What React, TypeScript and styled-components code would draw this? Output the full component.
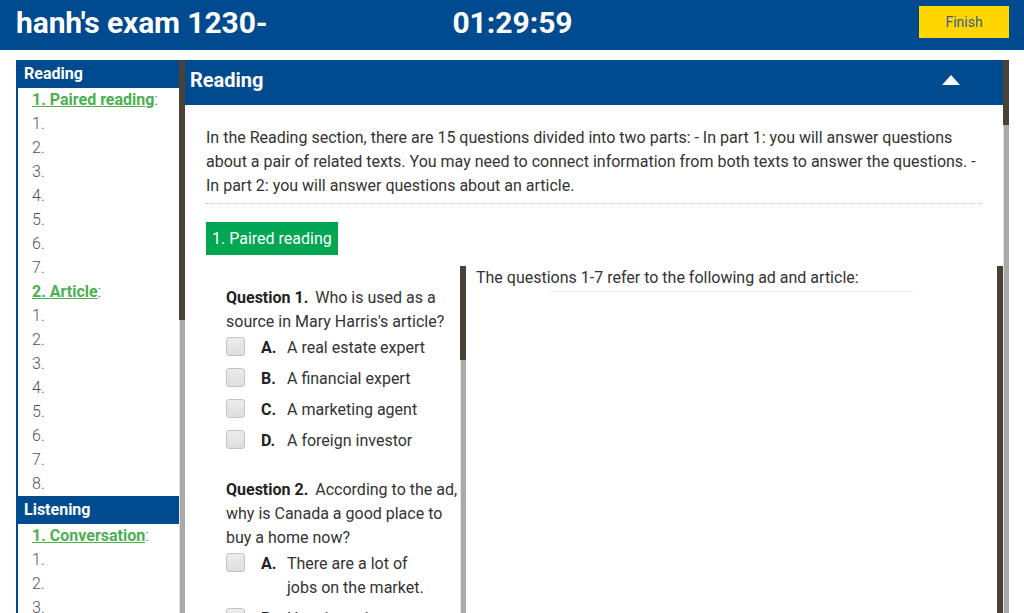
import styled, { createGlobalStyle } from "styled-components";

const Global = createGlobalStyle`
  html, body {
    margin: 0;
    padding: 0;
    background: #fff;
    overflow: hidden;
    font-family: Roboto, "Liberation Sans", Arial, sans-serif;
  }
  * { box-sizing: border-box; }
`;

const BLUE = "#004a8f";

const Page = styled.div`
  height: 100vh;
  display: flex;
  flex-direction: column;
`;

const TopBar = styled.header`
  height: 50px;
  flex: none;
  background: ${BLUE};
  color: #fff;
  display: grid;
  grid-template-columns: 1fr auto 1fr;
  align-items: center;
  padding: 0 15px 6px 16px;
`;

const ExamTitle = styled.h1`
  margin: 0;
  font-size: 30px;
  font-weight: 700;
  letter-spacing: -0.1px;
`;

const Timer = styled.div`
  font-size: 30px;
  font-weight: 700;
`;

const FinishButton = styled.button`
  justify-self: end;
  width: 90px;
  height: 32px;
  border: none;
  background: #ffd600;
  color: #3c5a8a;
  font-family: inherit;
  font-size: 14px;
`;

const Workspace = styled.div`
  flex: 1;
  min-height: 0;
  display: flex;
  padding: 10px 15px 0 16px;
`;

/* a pane with its own scroll track drawn beside the content */
const Pane = styled.div<{ $width?: number }>`
  display: flex;
  min-height: 0;
  min-width: 0;
  ${(p) => (p.$width ? `width: ${p.$width}px; flex: none;` : "flex: 1;")}
`;

const PaneContent = styled.div`
  flex: 1;
  min-width: 0;
  overflow: hidden;
`;

const ScrollTrack = styled.div`
  width: 6px;
  flex: none;
  background: #aaaaaa;
  border-left: 1px solid #e2e2e2;
`;

const ScrollThumb = styled.div<{ $size: number }>`
  height: ${(p) => p.$size}px;
  margin-left: -1px;
  background: #4a4237;
`;

const SideList = styled(PaneContent)`
  border-left: 2px solid ${BLUE};
`;

const SideHeading = styled.div`
  background: ${BLUE};
  color: #fff;
  font-weight: 700;
  font-size: 16px;
  height: 28px;
  line-height: 27px;
  padding-left: 6px;
`;

const SideRow = styled.div`
  line-height: 24px;
  font-size: 16px;
  padding-left: 14px;
  color: #555;
  font-weight: 300;
  white-space: nowrap;
`;

const PartLink = styled.a`
  color: #4caf50;
  font-weight: 700;
  text-decoration: underline;
`;

const SectionHeader = styled.div`
  height: 45px;
  background: ${BLUE};
  color: #fff;
  display: flex;
  align-items: center;
  justify-content: space-between;
  padding: 0 43px 5px 5px;
  font-size: 20px;
  font-weight: 700;
`;

const Caret = styled.span`
  width: 0;
  height: 0;
  border-left: 9px solid transparent;
  border-right: 9px solid transparent;
  border-bottom: 10px solid #fff;
`;

const Body = styled.div`
  padding: 21px 0 0 21px;
`;

const Intro = styled.p`
  margin: 0 21px 0 0;
  padding-bottom: 5px;
  font-size: 16px;
  line-height: 24px;
  color: #333;
  border-bottom: 1px dotted #c8c8c8;
`;

const PartBadge = styled.div`
  display: inline-block;
  margin-top: 18px;
  height: 33px;
  line-height: 33px;
  padding: 0 6px;
  background: #00a651;
  color: #fff;
  font-size: 16px;
`;

const Columns = styled.div`
  display: flex;
  margin-top: 11px;
  height: 480px;
`;

const QuestionList = styled.div`
  padding: 20px 0 0 20px;
`;

const Question = styled.div`
  margin-bottom: 25px;
  font-size: 16px;
  color: #333;
`;

const Prompt = styled.div`
  line-height: 24px;
  b {
    color: #222;
    margin-right: 3px;
  }
`;

const Option = styled.label`
  display: flex;
  align-items: flex-start;
  margin-top: 2px;
  line-height: 24px;
  & + & {
    margin-top: 7px;
  }
`;

const Box = styled.span`
  width: 19px;
  height: 19px;
  flex: none;
  margin-top: 1px;
  margin-right: 16px;
  border: 1px solid #c4c4c4;
  border-radius: 3px;
  background: linear-gradient(#ececec, #dedede);
`;

const Letter = styled.b`
  width: 26px;
  flex: none;
  color: #222;
`;

const OptionText = styled.span`
  max-width: 150px;
`;

const Passage = styled.div`
  padding: 2px 10px 0 10px;
  font-size: 16px;
  line-height: 20px;
  color: #333;
`;

const ImageSlot = styled.div`
  width: 363px;
  margin: 3px auto 0;
  border-top: 1px solid #ececec;
`;

const sidebar: { title: string; parts: { name: string; count: number }[] }[] = [
  {
    title: "Reading",
    parts: [
      { name: "1. Paired reading", count: 7 },
      { name: "2. Article", count: 8 },
    ],
  },
  {
    title: "Listening",
    parts: [
      { name: "1. Conversation", count: 8 },
      { name: "2. Lecture", count: 7 },
    ],
  },
  {
    title: "Writing",
    parts: [
      { name: "1. Email", count: 1 },
      { name: "2. Essay", count: 1 },
    ],
  },
  { title: "Speaking", parts: [{ name: "1. Speaking", count: 6 }] },
];

const questions = [
  {
    label: "Question 1.",
    text: "Who is used as a source in Mary Harris's article?",
    options: ["A real estate expert", "A financial expert", "A marketing agent", "A foreign investor"],
  },
  {
    label: "Question 2.",
    text: "According to the ad, why is Canada a good place to buy a home now?",
    options: [
      "There are a lot of jobs on the market.",
      "Housing prices are low.",
      "Interest rates are low.",
      "The economy is growing.",
    ],
  },
];

export default function App() {
  return (
    <Page>
      <Global />
      <TopBar>
        <ExamTitle>hanh's exam 1230-</ExamTitle>
        <Timer>01:29:59</Timer>
        <FinishButton>Finish</FinishButton>
      </TopBar>
      <Workspace>
        <Pane $width={169}>
          <SideList>
            {sidebar.map((s) => (
              <div key={s.title}>
                <SideHeading>{s.title}</SideHeading>
                {s.parts.map((p) => (
                  <div key={p.name}>
                    <SideRow>
                      <PartLink>{p.name}</PartLink>:
                    </SideRow>
                    {Array.from({ length: p.count }, (_, i) => (
                      <SideRow key={i}>{i + 1}.</SideRow>
                    ))}
                  </div>
                ))}
              </div>
            ))}
          </SideList>
          <ScrollTrack>
            <ScrollThumb $size={260} />
          </ScrollTrack>
        </Pane>
        <Pane>
          <PaneContent>
            <SectionHeader>
              Reading
              <Caret />
            </SectionHeader>
            <Body>
              <Intro>
                In the Reading section, there are 15 questions divided into two parts: - In part 1:
                you will answer questions about a pair of related texts. You may need to connect
                information from both texts to answer the questions. - In part 2: you will answer
                questions about an article.
              </Intro>
              <PartBadge>1. Paired reading</PartBadge>
              <Columns>
                <Pane $width={260}>
                  <PaneContent>
                    <QuestionList>
                      {questions.map((q) => (
                        <Question key={q.label}>
                          <Prompt>
                            <b>{q.label}</b> {q.text}
                          </Prompt>
                          {q.options.map((o, i) => (
                            <Option key={o}>
                              <Box />
                              <Letter>{"ABCD"[i]}.</Letter>
                              <OptionText>{o}</OptionText>
                            </Option>
                          ))}
                        </Question>
                      ))}
                    </QuestionList>
                  </PaneContent>
                  <ScrollTrack>
                    <ScrollThumb $size={94} />
                  </ScrollTrack>
                </Pane>
                <Pane>
                  <PaneContent>
                    <Passage>
                      The questions 1-7 refer to the following ad and article:
                      <ImageSlot />
                    </Passage>
                  </PaneContent>
                  <ScrollTrack>
                    <ScrollThumb $size={460} />
                  </ScrollTrack>
                </Pane>
              </Columns>
            </Body>
          </PaneContent>
          <ScrollTrack>
            <ScrollThumb $size={65} />
          </ScrollTrack>
        </Pane>
      </Workspace>
    </Page>
  );
}
